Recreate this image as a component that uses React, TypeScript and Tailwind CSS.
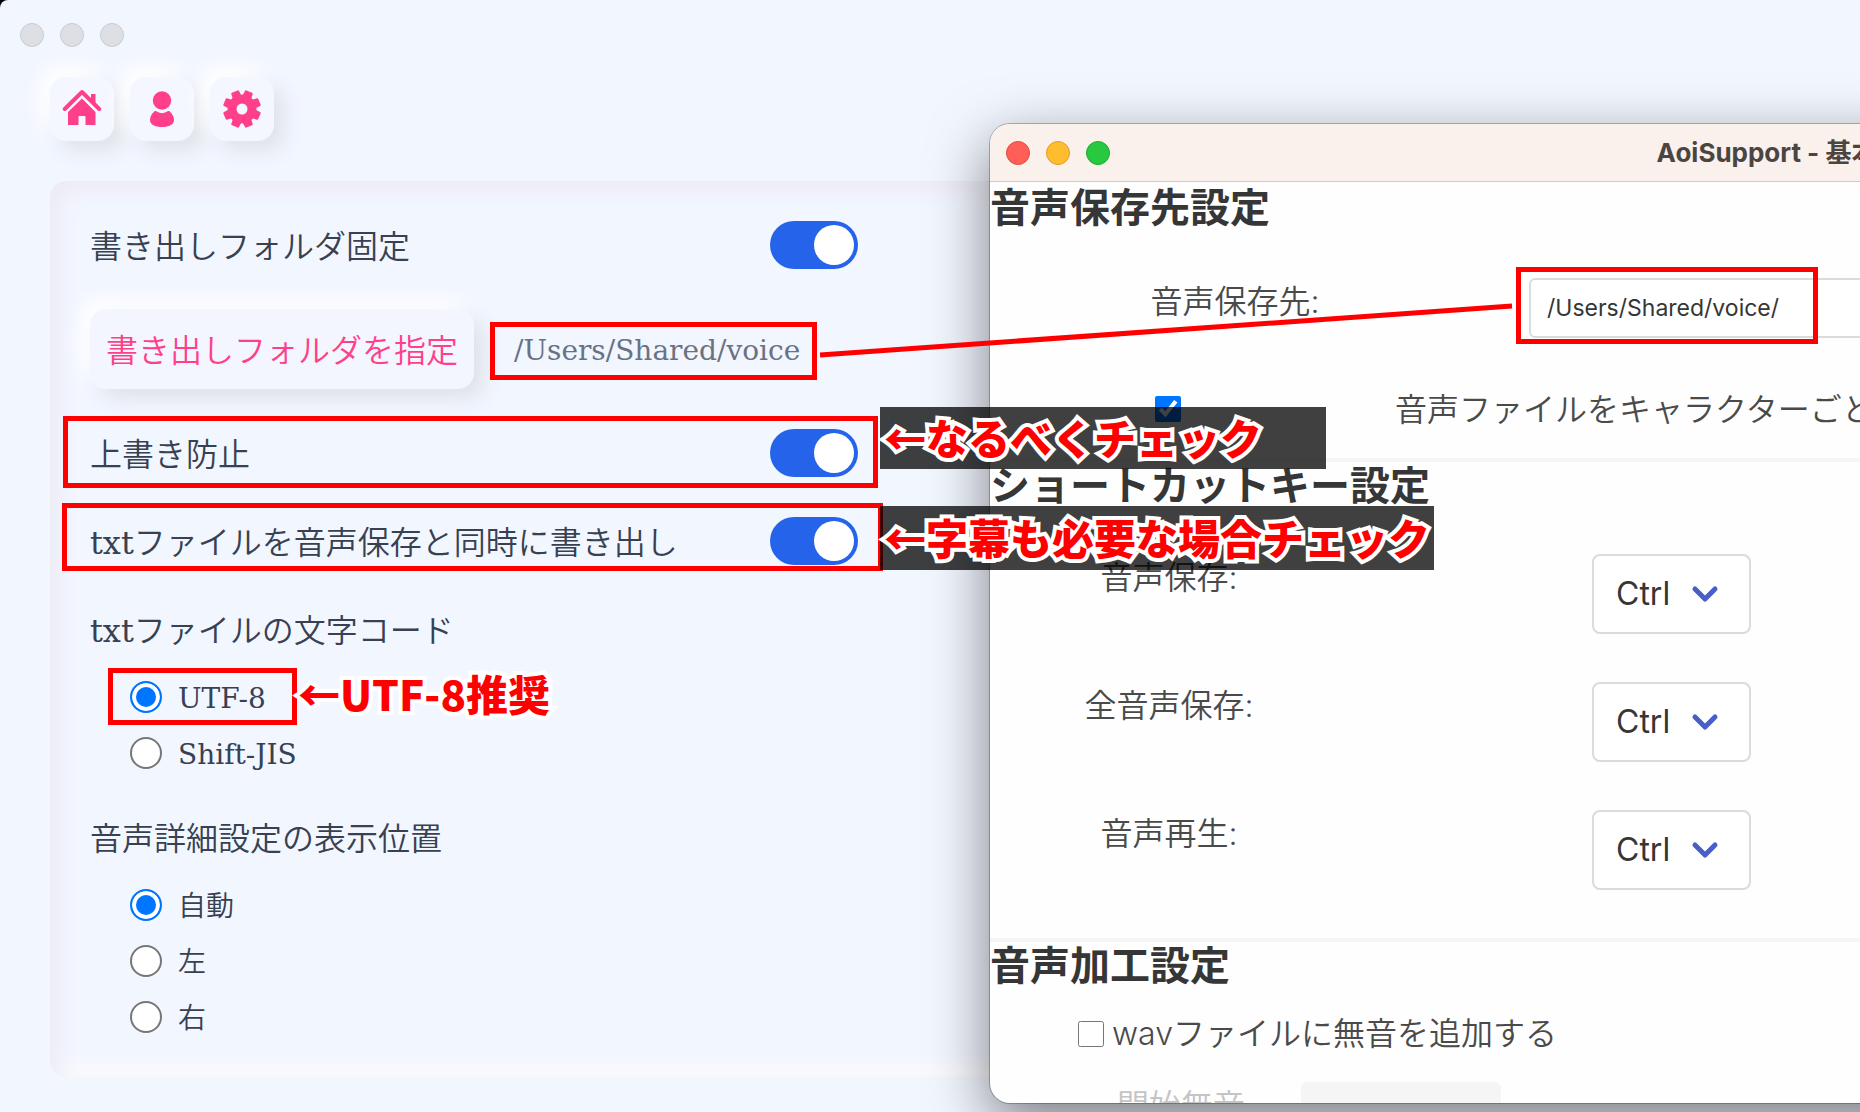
import { ReactNode } from "react";

const HomeIcon = () => (
  <svg viewBox="0 0 40 40" className="size-10" fill="#ff4088" aria-hidden="true">
    <path d="M20 9.500 33.500 23v13H23.500v-8a1 1 0 0 0-1-1h-5a1 1 0 0 0-1 1v8H6V23z" />
    <path d="M29 5H33.500v10L29 10.500z" />
    <path d="M2.800 20 20 3l17.200 17" fill="none" stroke="#ff4088" strokeWidth="4" strokeLinecap="round" strokeLinejoin="round" />
  </svg>
);

const UserIcon = () => (
  <svg viewBox="0 0 40 40" className="size-10" fill="#ff4088" aria-hidden="true">
    <circle cx="20" cy="11.500" r="9.200" />
    <path d="M12.500 22.300c1.200-.7 2 0 3.200.8 2.600 1.500 6 1.500 8.600 0 1.200-.8 2-1.500 3.200-.8C30.500 24.500 32 28.500 32 31c0 4.500-5 7-12 7S8 35.500 8 31c0-2.500 1.500-6.500 4.500-8.700z" />
  </svg>
);

const GearIcon = () => (
  <svg viewBox="0 0 40 40" className="size-10" aria-hidden="true">
    <circle cx="20" cy="20" r="10" fill="none" stroke="#ff4088" strokeWidth="9" />
    {[22.5, 67.5, 112.5, 157.5, 202.5, 247.5, 292.5, 337.5].map((deg) => (
      <path
        key={deg}
        d="M16.500 9 17 2.300h6L23.500 9z"
        fill="#ff4088"
        stroke="#ff4088"
        strokeWidth="2.400"
        strokeLinejoin="round"
        transform={`rotate(${deg} 20 20)`}
      />
    ))}
  </svg>
);

const NavButton = ({ label, children }: { label: string; children: ReactNode }) => (
  <button
    type="button"
    aria-label={label}
    className="flex size-16 items-center justify-center rounded-2xl bg-[#f4f7ff] shadow-[10px_10px_20px_#dfe2e8,-10px_-10px_20px_#ffffff]"
  >
    {children}
  </button>
);

const ToggleRow = ({ id, label }: { id: string; label: string }) => (
  <div className="flex h-[88px] w-[768px] items-center justify-between">
    <label htmlFor={id} className="pt-1">
      {label}
    </label>
    <input
      id={id}
      type="checkbox"
      role="switch"
      defaultChecked
      className="h-12 w-[88px] appearance-none rounded-full bg-gray-300 p-1 before:block before:size-10 before:rounded-full before:bg-white checked:bg-[#2563eb] checked:before:ml-10"
    />
  </div>
);

const RadioRow = ({ name, label, checked }: { name: string; label: string; checked?: boolean }) => (
  <label className="flex h-14 items-center gap-4 pl-10 text-[28px]">
    <input
      type="radio"
      name={name}
      defaultChecked={checked}
      className="size-8 appearance-none rounded-full border-2 border-[#767676] bg-white checked:border-[#0075ff] checked:bg-[#0075ff] checked:shadow-[inset_0_0_0_4px_white]"
    />
    <span className="pt-1">{label}</span>
  </label>
);

const ShortcutRow = ({ id, label }: { id: string; label: string }) => (
  <div className="flex h-32 items-center">
    <label htmlFor={id} className="w-[358px] pb-8 text-center font-[350]">
      {label}
    </label>
    <div className="relative ml-[244px]">
      <select
        id={id}
        className="h-20 w-[159px] appearance-none rounded-lg border-2 border-[#dbdbdb] bg-white pl-[22px] text-[#363636]"
      >
        <option>Ctrl</option>
      </select>
      <svg viewBox="0 0 28 20" className="pointer-events-none absolute top-[30px] right-[32px] h-5 w-7" aria-hidden="true">
        <path d="M4 5 14 15 24 5" fill="none" stroke="#485fc7" strokeWidth="5" strokeLinecap="round" strokeLinejoin="round" />
      </svg>
    </div>
  </div>
);

const Note = ({ className, children }: { className: string; children: ReactNode }) => (
  <p
    className={`absolute flex items-center pb-1 pl-1 whitespace-nowrap font-['Noto_Sans_CJK_JP',sans-serif] text-[42px] font-black text-[#ff0000] [-webkit-text-stroke:8px_white] [paint-order:stroke_fill] ${className}`}
  >
    {children}
  </p>
);

const Frame = ({ className }: { className: string }) => (
  <div className={`absolute border-[5px] border-[#ff0000] ${className}`} />
);

const SettingsPage = () => (
  <main className="min-h-screen rounded-tl-lg bg-[#f2f6ff] pt-[23px] pb-8 font-['DejaVu_Serif','Noto_Sans_CJK_JP',sans-serif] text-[32px] font-[350] text-[#374151]">
    <div className="flex gap-4 pl-5">
      <span className="size-6 rounded-full border border-[#c9cbd0] bg-[#dddfe4]" />
      <span className="size-6 rounded-full border border-[#c9cbd0] bg-[#dddfe4]" />
      <span className="size-6 rounded-full border border-[#c9cbd0] bg-[#dddfe4]" />
    </div>
    <nav className="mt-[30px] flex gap-4 pl-[50px]">
      <NavButton label="ホーム">
        <HomeIcon />
      </NavButton>
      <NavButton label="キャラクター">
        <UserIcon />
      </NavButton>
      <NavButton label="設定">
        <GearIcon />
      </NavButton>
    </nav>
    <section className="mt-10 ml-[50px] rounded-2xl pt-5 pb-8 pl-10 shadow-[inset_10px_10px_20px_#edebf4,inset_-10px_-10px_20px_#fcfcfd]">
      <ToggleRow id="fix-folder" label="書き出しフォルダ固定" />
      <div className="flex h-[120px] items-center gap-10">
        <button
          type="button"
          className="h-20 rounded-2xl bg-[#f3f6ff] px-4 pt-1 text-[#ff4088] shadow-[10px_10px_20px_#dfe2e8,-10px_-10px_20px_#ffffff]"
        >
          書き出しフォルダを指定
        </button>
        <span className="pt-1 text-[28px] text-gray-500">/Users/Shared/voice</span>
      </div>
      <ToggleRow id="no-overwrite" label="上書き防止" />
      <ToggleRow id="export-txt" label="txtファイルを音声保存と同時に書き出し" />
      <fieldset>
        <legend className="flex h-[84px] items-center pt-2">txtファイルの文字コード</legend>
        <RadioRow name="encoding" label="UTF-8" checked />
        <RadioRow name="encoding" label="Shift-JIS" />
      </fieldset>
      <fieldset>
        <legend className="flex h-24 items-center pt-5">音声詳細設定の表示位置</legend>
        <RadioRow name="position" label="自動" checked />
        <RadioRow name="position" label="左" />
        <RadioRow name="position" label="右" />
      </fieldset>
    </section>
  </main>
);

const SupportWindow = () => (
  <div className="absolute top-[124px] bottom-[9px] left-[990px] w-[1606px] overflow-hidden rounded-[20px] bg-[#fefefe] font-[Inter,'Noto_Sans_CJK_JP',sans-serif] text-[32px] text-[#4a4a4a] shadow-[0_0_0_1px_rgba(0,0,0,0.25),0_20px_60px_rgba(0,0,0,0.5)]">
    <header className="grid h-[58px] grid-cols-[1fr_auto_1fr] items-center border-b border-[#cfc9c7] bg-[#faf0ec] px-4">
      <div className="flex gap-4">
        <span className="size-6 rounded-full border border-[#e2493f] bg-[#ff5f57]" />
        <span className="size-6 rounded-full border border-[#e0a020] bg-[#febc2e]" />
        <span className="size-6 rounded-full border border-[#1dad2b] bg-[#28c840]" />
      </div>
      <h1 className="text-[26px] font-bold whitespace-nowrap text-[#4b4542]">AoiSupport - 基本設定</h1>
    </header>

    <section className="border-b-4 border-[#f5f5f5] pt-0.5 pb-6">
      <h2 className="text-[40px] leading-12 font-bold text-[#363636]">音声保存先設定</h2>
      <div className="flex h-[152px] items-center">
        <label htmlFor="voice-path" className="w-[490px] pb-3 text-center font-[350]">
          音声保存先:
        </label>
        <input
          id="voice-path"
          type="text"
          defaultValue="/Users/Shared/voice/"
          className="ml-[49px] h-[60px] w-[600px] rounded-md border-2 border-[#dbdbdb] bg-white px-4 text-[23px] text-[#363636]"
        />
      </div>
      <div className="flex h-[50px] items-center gap-[214px] pl-[165px]">
        <input id="per-character" type="checkbox" defaultChecked className="size-[26px] accent-[#0075ff]" />
        <label htmlFor="per-character" className="pt-0.5 font-[350] whitespace-nowrap">
          音声ファイルをキャラクターごと
        </label>
      </div>
    </section>

    <section className="border-b-4 border-[#f5f5f5] pb-6">
      <h2 className="mb-5 text-[40px] leading-12 font-bold text-[#363636]">ショートカットキー設定</h2>
      <ShortcutRow id="key-save" label="音声保存:" />
      <ShortcutRow id="key-save-all" label="全音声保存:" />
      <ShortcutRow id="key-play" label="音声再生:" />
    </section>

    <section>
      <h2 className="text-[40px] leading-12 font-bold text-[#363636]">音声加工設定</h2>
      <label className="mt-5 flex h-12 items-center gap-2 pl-[88px] font-[350]">
        <input type="checkbox" className="size-[26px]" />
        wavファイルに無音を追加する
      </label>
      <div className="mt-6 flex h-12 items-center gap-14 pl-[127px]">
        <label htmlFor="lead-silence" className="font-[350] text-[#c4c4c4]">
          開始無音
        </label>
        <input id="lead-silence" type="text" disabled className="h-12 w-[200px] rounded-md bg-[#f5f5f5]" />
      </div>
    </section>
  </div>
);

// Red frames and captions that sit on top of both windows
const Annotations = () => (
  <div className="pointer-events-none absolute inset-0">
    <Frame className="top-[322px] left-[490px] h-[58px] w-[327px]" />
    <Frame className="top-[267px] left-[1516px] h-[77px] w-[302px]" />
    <svg viewBox="0 0 700 60" className="absolute top-[300px] left-[816px] h-[60px] w-[700px]" aria-hidden="true">
      <path d="M4 55 696 6" stroke="#ff0000" strokeWidth="5" />
    </svg>
    <Frame className="top-[416px] left-[63px] h-[72px] w-[815px]" />
    <Frame className="top-[503px] left-[62px] h-[68px] w-[821px]" />
    <Frame className="top-[668px] left-[108px] h-[57px] w-[189px]" />
    <Note className="top-[407px] left-[880px] h-[62px] w-[446px] bg-black/75">←なるべくチェック</Note>
    <Note className="top-[506px] left-[880px] h-[64px] w-[554px] bg-black/75">←字幕も必要な場合チェック</Note>
    <Note className="top-[663px] left-[294px] h-[62px]">←UTF-8推奨</Note>
  </div>
);

const App = () => {
  return (
    <div className="relative min-h-screen overflow-hidden bg-black">
      <SettingsPage />
      <SupportWindow />
      <Annotations />
    </div>
  );
};

export default App;
